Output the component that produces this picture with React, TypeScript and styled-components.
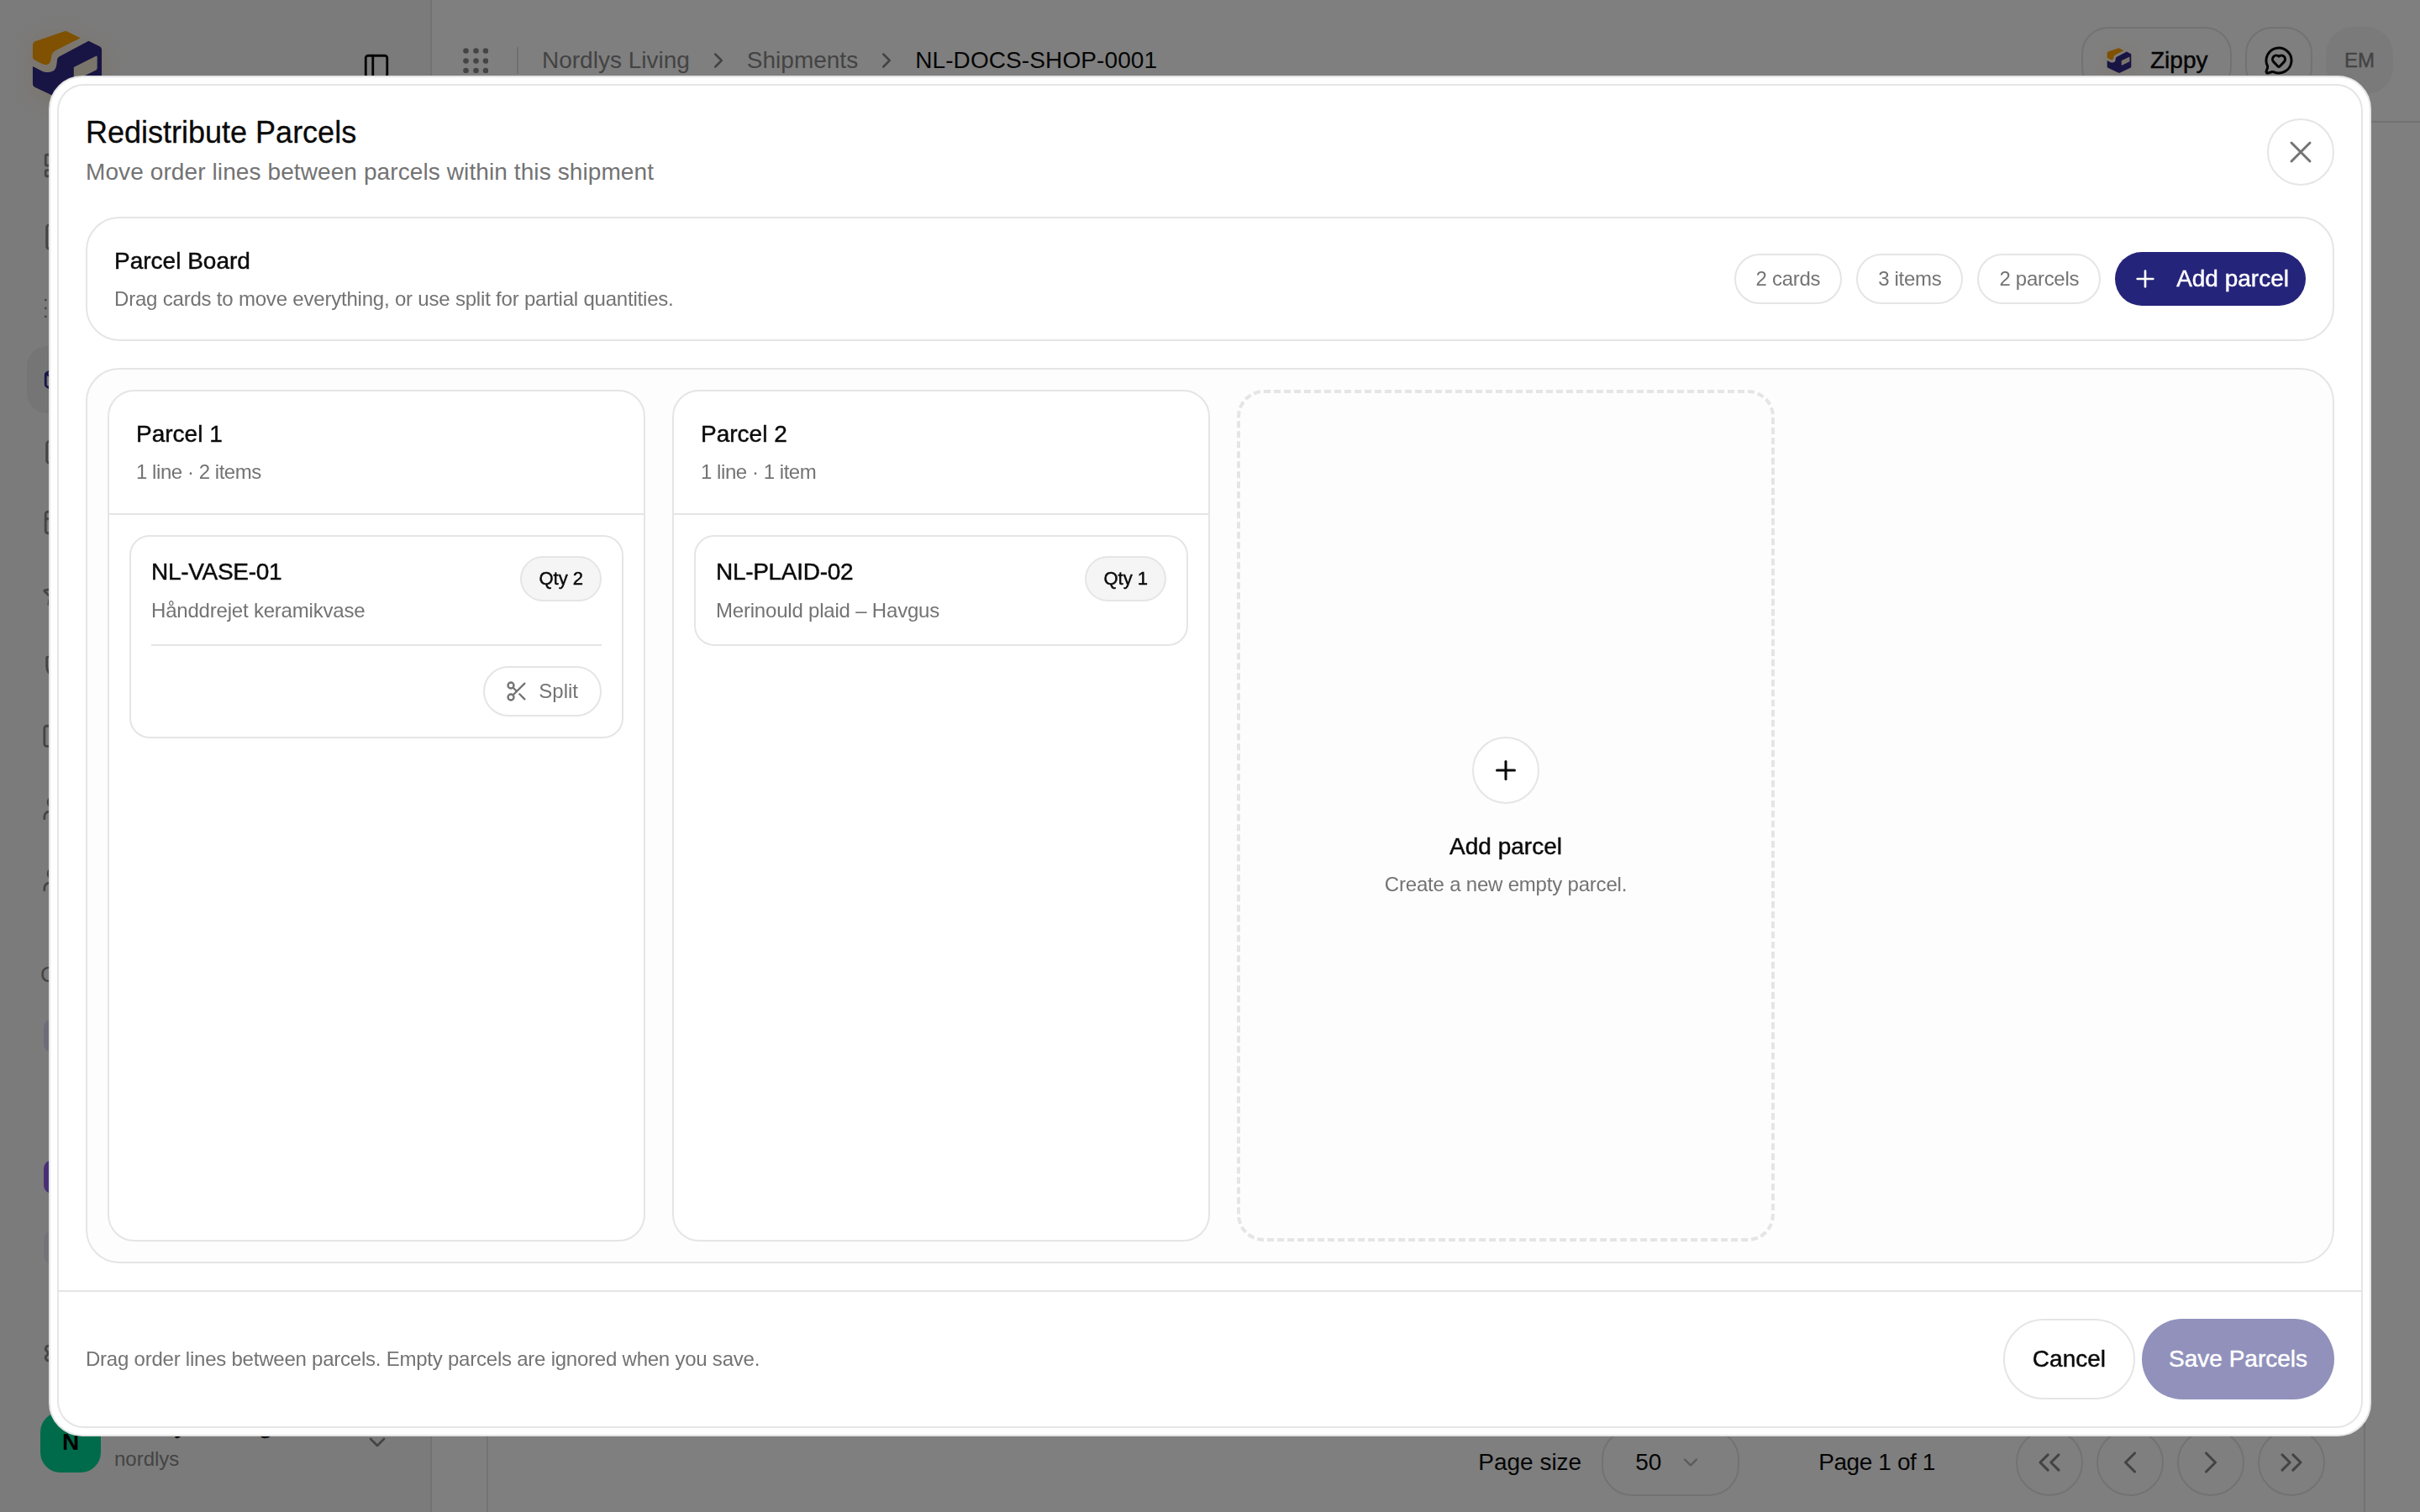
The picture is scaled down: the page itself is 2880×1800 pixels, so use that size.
import { createGlobalStyle, styled, css } from "styled-components";
import {
  Plus,
  X,
  Scissors,
  PanelLeft,
  MessageCircleHeart,
  ChevronRight,
  ChevronDown,
  ChevronLeft,
  ChevronsLeft,
  ChevronsRight,
  LayoutDashboard,
  FileText,
  List,
  Package,
  ClipboardList,
  PanelTop,
  Star,
  Shield,
  Folder,
  Users,
  UserPlus,
  Settings,
} from "lucide-react";

const GlobalStyle = createGlobalStyle`
  html, body {
    margin: 0;
    padding: 0;
    width: 2880px;
    height: 1800px;
    overflow: hidden;
    background: #fff;
    font-family: "Liberation Sans", Arial, sans-serif;
    color: #0a0a0a;
  }
  * { box-sizing: border-box; }
`;

const medium = css`
  -webkit-text-stroke: 0.45px currentColor;
`;

const Page = styled.div`
  display: flex;
  width: 2880px;
  height: 1800px;
  overflow: hidden;
`;

/* ---- page behind the dialog ---- */

const Sidebar = styled.aside`
  display: flex;
  flex-direction: column;
  width: 514px;
  flex-shrink: 0;
  background: #f6f6f6;
  border-right: 2px solid #e5e5e5;
`;

const Brand = styled.div`
  display: flex;
  align-items: center;
  justify-content: space-between;
  height: 157px;
  padding: 1px 47px 0 37px;
  color: #0a0a0a;
`;

const LogoSvg = styled.svg`
  filter: drop-shadow(0 4px 12px rgba(255, 170, 40, 0.22));
`;

const Nav = styled.nav<{ $gap: number }>`
  display: flex;
  flex-direction: column;
  gap: ${(p) => p.$gap}px;
  padding: 0 32px;
`;

const NavRow = styled.div<{ $active?: boolean }>`
  display: flex;
  align-items: center;
  height: 80px;
  padding-left: 18px;
  border-radius: 24px;
  color: ${(p) => (p.$active ? "#312f91" : "#8a8a8a")};
  background: ${(p) => (p.$active ? "#ebebeb" : "transparent")};
`;

const SectionLabel = styled.div`
  height: 44px;
  margin: 51px 0 11px;
  padding-left: 48px;
  font-size: 26px;
  line-height: 44px;
  color: #888;
`;

const Tile = styled.span<{ $color: string }>`
  width: 40px;
  height: 40px;
  margin-left: 2px;
  border-radius: 10px;
  background: ${(p) => p.$color};
`;

const SettingsNav = styled(Nav)`
  margin-top: 46px;
`;

const Workspace = styled.div`
  display: flex;
  align-items: center;
  gap: 16px;
  margin-top: 30px;
  padding: 0 47px 0 48px;
`;

const Avatar = styled.div`
  display: flex;
  align-items: center;
  justify-content: center;
  width: 72px;
  height: 72px;
  border-radius: 24px;
  background: #00d694;
  font-size: 28px;
  font-weight: 700;
  color: #000;
`;

const WorkspaceText = styled.div`
  display: flex;
  flex-direction: column;
  margin-top: -3px;
`;

const WorkspaceName = styled.span`
  margin-bottom: 7px;
  font-size: 30px;
  line-height: 36px;
  ${medium}
`;

const WorkspaceSlug = styled.span`
  font-size: 24px;
  line-height: 32px;
  color: #888;
`;

const WorkspaceChevron = styled(ChevronDown)`
  margin-left: auto;
  color: #888;
`;

const Main = styled.main`
  display: flex;
  flex: 1;
  flex-direction: column;
  min-width: 0;
`;

const TopBar = styled.header`
  display: flex;
  align-items: center;
  height: 146px;
  padding: 0 32px 0 37px;
  border-bottom: 2px solid #e5e5e5;
  flex-shrink: 0;
`;

const Separator = styled.span`
  width: 2px;
  height: 32px;
  margin: 0 28px 0 34px;
  background: #e0e0e0;
`;

const Crumbs = styled.div`
  display: flex;
  align-items: center;
  gap: 19px;
  font-size: 28px;
  color: #878787;
`;

const CrumbCurrent = styled.span`
  color: #0a0a0a;
  letter-spacing: 0.1px;
`;

const TopActions = styled.div`
  display: flex;
  align-items: center;
  gap: 16px;
  margin-left: auto;
`;

const ZippyButton = styled.div`
  display: flex;
  align-items: center;
  gap: 22px;
  width: 179px;
  height: 80px;
  padding-left: 28px;
  border: 2px solid #e5e5e5;
  border-radius: 32px;
  font-size: 28px;
  ${medium}
`;

const IconTile = styled.div`
  display: flex;
  align-items: center;
  justify-content: center;
  width: 80px;
  height: 80px;
  border: 2px solid #e5e5e5;
  border-radius: 32px;
`;

const UserBadge = styled(IconTile)`
  border: 0;
  background: #f5f5f5;
  font-size: 24px;
  color: #888;
  ${medium}
`;

const TableCard = styled.section`
  display: flex;
  flex: 1;
  flex-direction: column;
  justify-content: flex-end;
  margin: 32px 65px -40px;
  padding: 0 46px 57px 0;
  border: 2px solid #e5e5e5;
  border-radius: 32px;
`;

const Pager = styled.div`
  display: flex;
  align-items: center;
  justify-content: flex-end;
  font-size: 28px;
`;

const PageSizeSelect = styled.div`
  display: flex;
  align-items: center;
  justify-content: space-between;
  width: 164px;
  height: 80px;
  margin: 0 94px 0 24px;
  padding: 0 42px 0 38px;
  border: 2px solid #e5e5e5;
  border-radius: 36px;
  color: #0a0a0a;
`;

const PageLabel = styled.span`
  letter-spacing: -0.4px;
`;

const PagerButtons = styled.div`
  display: flex;
  gap: 16px;
  margin-left: 96px;
  color: #888;
`;

const PagerButton = styled.div`
  display: flex;
  align-items: center;
  justify-content: center;
  width: 80px;
  height: 80px;
  border: 2px solid #e5e5e5;
  border-radius: 40px;
`;

/* ---- dialog ---- */

const Overlay = styled.div`
  position: fixed;
  inset: 0;
  display: flex;
  align-items: center;
  justify-content: center;
  background: rgba(0, 0, 0, 0.5);
`;

const Dialog = styled.div`
  width: 2764px;
  height: 1620px;
  padding: 8px;
  background: #fff;
  border: 2px solid #e5e5e5;
  border-radius: 40px;
`;

const DialogInner = styled.div`
  display: flex;
  flex-direction: column;
  height: 100%;
  border: 2px solid #e5e5e5;
  border-radius: 32px;
`;

const DialogHeader = styled.div`
  display: flex;
  align-items: center;
  justify-content: space-between;
  padding: 34px 32px 33px;
`;

const Title = styled.h2`
  margin: 0 0 5px;
  font-size: 36px;
  font-weight: 400;
  line-height: 44px;
  -webkit-text-stroke: 0.3px currentColor;
`;

const Subtitle = styled.p`
  margin: 0;
  font-size: 28px;
  line-height: 40px;
  letter-spacing: 0.1px;
  color: #737373;
`;

const RoundIconButton = styled.button`
  display: flex;
  align-items: center;
  justify-content: center;
  width: 80px;
  height: 80px;
  padding: 0;
  background: #fff;
  border: 2px solid #e5e5e5;
  border-radius: 50%;
  color: ${(p) => p.color || "#0a0a0a"};
`;

const DialogBody = styled.div`
  display: flex;
  flex: 1;
  flex-direction: column;
  gap: 32px;
  min-height: 0;
  padding: 0 32px 32px;
`;

const BoardHeader = styled.div`
  display: flex;
  align-items: center;
  justify-content: space-between;
  height: 148px;
  padding: 0 32px;
  border: 2px solid #e5e5e5;
  border-radius: 40px;
`;

const Heading = styled.div`
  font-size: 28px;
  line-height: 42px;
  ${medium}
`;

const Muted = styled.div`
  margin-top: 6px;
  font-size: 24px;
  line-height: 36px;
  letter-spacing: -0.2px;
  color: #737373;
`;

const ColumnMeta = styled(Muted)`
  letter-spacing: -0.45px;
`;

const LineDescription = styled(Muted)`
  margin-top: 10px;
`;

const BoardStats = styled.div`
  display: flex;
  align-items: center;
  gap: 17px;
`;

const StatPill = styled.span`
  display: flex;
  align-items: center;
  height: 60px;
  padding: 0 24px;
  border: 2px solid #e5e5e5;
  border-radius: 30px;
  font-size: 24px;
  letter-spacing: -0.3px;
  color: #737373;
`;

const AddParcelButton = styled.button`
  display: flex;
  align-items: center;
  gap: 21px;
  height: 64px;
  padding: 0 20px;
  background: #25247b;
  border: 0;
  border-radius: 32px;
  font-family: inherit;
  font-size: 28px;
  color: #fff;
  ${medium}
`;

const Board = styled.div`
  display: flex;
  flex: 1;
  gap: 32px;
  min-height: 0;
  padding: 24px;
  background: #fdfdfd;
  border: 2px solid #e5e5e5;
  border-radius: 40px;
`;

const Column = styled.div`
  display: flex;
  flex-direction: column;
  width: 640px;
  background: #fff;
  border: 2px solid #e5e5e5;
  border-radius: 32px;
`;

const ColumnHeader = styled.div`
  padding: 30px 32px 31px;
  border-bottom: 2px solid #e5e5e5;
`;

const ColumnBody = styled.div`
  padding: 24px;
`;

const LineCard = styled.div`
  padding: 24px 24px 22px;
  background: #fff;
  border: 2px solid #e5e5e5;
  border-radius: 24px;
`;

const LineTop = styled.div`
  display: flex;
  align-items: flex-start;
  justify-content: space-between;
`;

const LineSku = styled.div`
  font-size: 28px;
  line-height: 36px;
  letter-spacing: -0.3px;
  ${medium}
`;

const QtyBadge = styled.span`
  display: flex;
  align-items: center;
  height: 54px;
  margin-top: -1px;
  padding: 0 20px;
  background: #f5f5f5;
  border: 2px solid #e5e5e5;
  border-radius: 27px;
  font-size: 22px;
  ${medium}
`;

const LineActions = styled.div`
  display: flex;
  justify-content: flex-end;
  margin-top: 22px;
  padding: 24px 0 2px;
  border-top: 2px solid #e5e5e5;
`;

const SplitButton = styled.button`
  display: flex;
  align-items: center;
  gap: 12px;
  height: 60px;
  padding: 0 26px 0 24px;
  background: #fff;
  border: 2px solid #e5e5e5;
  border-radius: 30px;
  font-family: inherit;
  font-size: 24px;
  color: #737373;
`;

const NewParcelColumn = styled.div`
  display: flex;
  flex-direction: column;
  align-items: center;
  justify-content: center;
  width: 640px;
  padding-top: 5px;
  border: 4px dashed #e5e5e5;
  border-radius: 32px;
`;

const NewParcelIcon = styled(RoundIconButton)`
  margin-bottom: 30px;
`;

const DialogFooter = styled.div`
  display: flex;
  align-items: center;
  justify-content: space-between;
  padding: 32px;
  border-top: 2px solid #e5e5e5;
`;

const FooterNote = styled.span`
  font-size: 24px;
  letter-spacing: -0.23px;
  color: #737373;
`;

const FooterActions = styled.div`
  display: flex;
  gap: 8px;
`;

const PillButton = styled.button<{ $primary?: boolean }>`
  height: 96px;
  padding: 0 ${(p) => (p.$primary ? 32 : 33)}px;
  border: ${(p) => (p.$primary ? "0" : "2px solid #e5e5e5")};
  border-radius: 48px;
  background: ${(p) => (p.$primary ? "#25247b" : "#fff")};
  opacity: ${(p) => (p.$primary ? 0.5 : 1)};
  font-family: inherit;
  font-size: 28px;
  color: ${(p) => (p.$primary ? "#fff" : "#0a0a0a")};
  ${medium}
`;

function LogoMark({ size }: { size: number }) {
  return (
    <LogoSvg width={size} height={size} viewBox="0 0 84 88">
      <path
        d="M38 1.500a5 5 0 0 1 4 0L58 9.500 30 23.500c-5 2.500-7 5-7.500 10-.5 5-2 8-6 8.500-2 .3-4-.5-6-1.500L3 36.500a5 5 0 0 1-3-4.500V18a5 5 0 0 1 3-4.500z"
        fill="#ffa200"
      />
      <path
        d="M68 13l13 6.500a5 5 0 0 1 3 4.500v41a5 5 0 0 1-3 4.500L44 87a5 5 0 0 1-4 0L3 69.500a5 5 0 0 1-3-4.500V44l11 5.500c4 2 9 2.500 13 .5s5-6 5.500-11.500c.3-4 1-5.500 4-7z"
        fill="#312a88"
      />
      <path
        d="M50 45l27-13.500a1 1 0 0 1 1.500 1V46a3 3 0 0 1-1.500 2.500L52 61a1.500 1.500 0 0 1-2-1.500z"
        fill="#f5ebd6"
      />
    </LogoSvg>
  );
}

function GridDots() {
  const stops = [3.5, 15.5, 27];
  return (
    <svg width={30} height={30} viewBox="0 0 30 30" fill="#888">
      {stops.map((y) =>
        stops.map((x) => <circle key={`${x}-${y}`} cx={x} cy={y} r={3.3} />)
      )}
    </svg>
  );
}

const navIcons = [
  LayoutDashboard,
  FileText,
  List,
  Package,
  ClipboardList,
  PanelTop,
  Star,
  Shield,
  Folder,
  Users,
  UserPlus,
];

function App() {
  return (
    <>
      <GlobalStyle />
      <Page>
        <Sidebar>
          <Brand>
            <LogoMark size={86} />
            <PanelLeft size={34} strokeWidth={2} />
          </Brand>
          <Nav $gap={5}>
            {navIcons.map((Icon, i) => (
              <NavRow key={i} $active={i === 3}>
                <Icon size={34} strokeWidth={2} />
              </NavRow>
            ))}
          </Nav>
          <SectionLabel>C</SectionLabel>
          <Nav $gap={4}>
            <NavRow>
              <Tile $color="#dcd9f0" />
            </NavRow>
            <NavRow />
            <NavRow>
              <Tile $color="#935fef" />
            </NavRow>
            <NavRow>
              <Tile $color="#e8e8f0" />
            </NavRow>
          </Nav>
          <SettingsNav $gap={0}>
            <NavRow>
              <Settings size={34} strokeWidth={2} />
            </NavRow>
          </SettingsNav>
          <Workspace>
            <Avatar>N</Avatar>
            <WorkspaceText>
              <WorkspaceName>Nordlys Living</WorkspaceName>
              <WorkspaceSlug>nordlys</WorkspaceSlug>
            </WorkspaceText>
            <WorkspaceChevron size={32} />
          </Workspace>
        </Sidebar>
        <Main>
          <TopBar>
            <GridDots />
            <Separator />
            <Crumbs>
              <span>Nordlys Living</span>
              <ChevronRight size={30} />
              <span>Shipments</span>
              <ChevronRight size={30} />
              <CrumbCurrent>NL-DOCS-SHOP-0001</CrumbCurrent>
            </Crumbs>
            <TopActions>
              <ZippyButton>
                <LogoMark size={30} />
                Zippy
              </ZippyButton>
              <IconTile>
                <MessageCircleHeart size={36} strokeWidth={2} />
              </IconTile>
              <UserBadge>EM</UserBadge>
            </TopActions>
          </TopBar>
          <TableCard>
            <Pager>
              Page size
              <PageSizeSelect>
                50
                <ChevronDown size={28} color="#b4b4b4" />
              </PageSizeSelect>
              <PageLabel>Page 1 of 1</PageLabel>
              <PagerButtons>
                <PagerButton>
                  <ChevronsLeft size={44} strokeWidth={1.7} />
                </PagerButton>
                <PagerButton>
                  <ChevronLeft size={44} strokeWidth={1.7} />
                </PagerButton>
                <PagerButton>
                  <ChevronRight size={44} strokeWidth={1.7} />
                </PagerButton>
                <PagerButton>
                  <ChevronsRight size={44} strokeWidth={1.7} />
                </PagerButton>
              </PagerButtons>
            </Pager>
          </TableCard>
        </Main>

        <Overlay>
          <Dialog>
            <DialogInner>
              <DialogHeader>
                <div>
                  <Title>Redistribute Parcels</Title>
                  <Subtitle>Move order lines between parcels within this shipment</Subtitle>
                </div>
                <RoundIconButton color="#737373">
                  <X size={44} strokeWidth={1.6} />
                </RoundIconButton>
              </DialogHeader>
              <DialogBody>
                <BoardHeader>
                  <div>
                    <Heading>Parcel Board</Heading>
                    <Muted>Drag cards to move everything, or use split for partial quantities.</Muted>
                  </div>
                  <BoardStats>
                    <StatPill>2 cards</StatPill>
                    <StatPill>3 items</StatPill>
                    <StatPill>2 parcels</StatPill>
                    <AddParcelButton>
                      <Plus size={32} strokeWidth={2} />
                      Add parcel
                    </AddParcelButton>
                  </BoardStats>
                </BoardHeader>
                <Board>
                  <Column>
                    <ColumnHeader>
                      <Heading>Parcel 1</Heading>
                      <ColumnMeta>1 line · 2 items</ColumnMeta>
                    </ColumnHeader>
                    <ColumnBody>
                      <LineCard>
                        <LineTop>
                          <div>
                            <LineSku>NL-VASE-01</LineSku>
                            <LineDescription>Hånddrejet keramikvase</LineDescription>
                          </div>
                          <QtyBadge>Qty 2</QtyBadge>
                        </LineTop>
                        <LineActions>
                          <SplitButton>
                            <Scissors size={28} strokeWidth={2} />
                            Split
                          </SplitButton>
                        </LineActions>
                      </LineCard>
                    </ColumnBody>
                  </Column>
                  <Column>
                    <ColumnHeader>
                      <Heading>Parcel 2</Heading>
                      <ColumnMeta>1 line · 1 item</ColumnMeta>
                    </ColumnHeader>
                    <ColumnBody>
                      <LineCard>
                        <LineTop>
                          <div>
                            <LineSku>NL-PLAID-02</LineSku>
                            <LineDescription>Merinould plaid – Havgus</LineDescription>
                          </div>
                          <QtyBadge>Qty 1</QtyBadge>
                        </LineTop>
                      </LineCard>
                    </ColumnBody>
                  </Column>
                  <NewParcelColumn>
                    <NewParcelIcon>
                      <Plus size={36} strokeWidth={2} />
                    </NewParcelIcon>
                    <Heading>Add parcel</Heading>
                    <Muted>Create a new empty parcel.</Muted>
                  </NewParcelColumn>
                </Board>
              </DialogBody>
              <DialogFooter>
                <FooterNote>Drag order lines between parcels. Empty parcels are ignored when you save.</FooterNote>
                <FooterActions>
                  <PillButton>Cancel</PillButton>
                  <PillButton $primary>Save Parcels</PillButton>
                </FooterActions>
              </DialogFooter>
            </DialogInner>
          </Dialog>
        </Overlay>
      </Page>
    </>
  );
}

export default App;
